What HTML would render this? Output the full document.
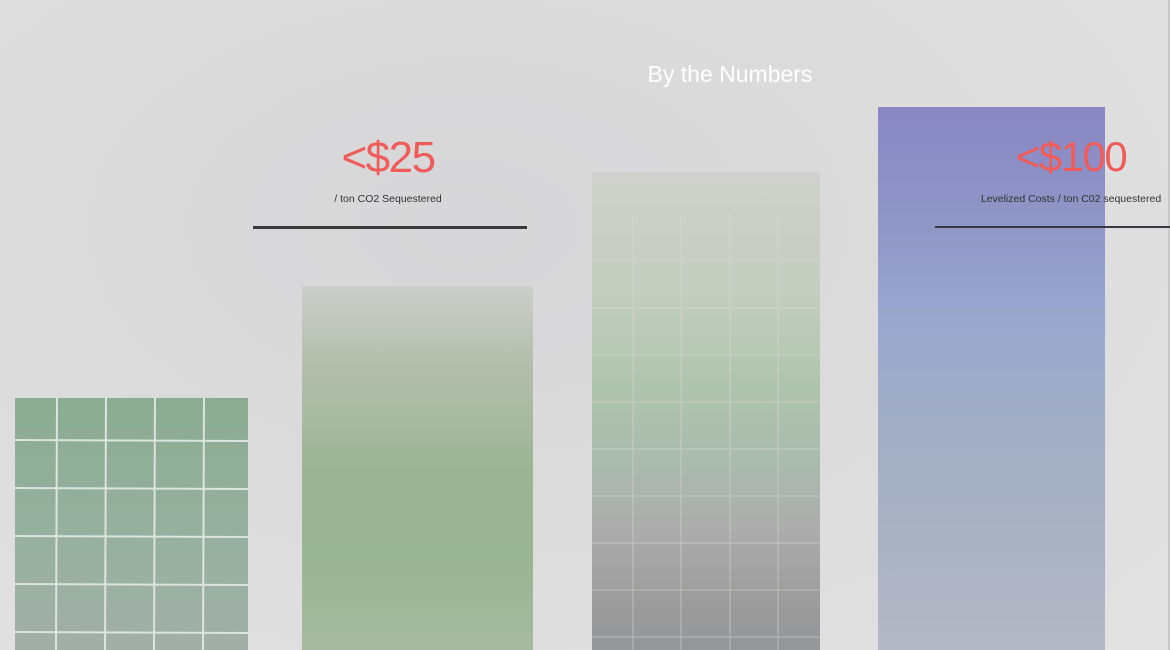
<!DOCTYPE html>
<html><head><meta charset="utf-8"><style>
html,body{margin:0;padding:0}
body{width:1170px;height:650px;overflow:hidden;position:relative;font-family:"Liberation Sans",sans-serif;
background:radial-gradient(ellipse at 40% 35%,#d6d6d8 0%,#dcdcdc 50%,#e2e2e2 100%);}
.bar{position:absolute;}
.t{position:absolute;text-align:center;}
.big{color:#f05c5a;font-size:44px;letter-spacing:-1.5px}
.sm{color:#333;font-size:10.5px}
.line{position:absolute;height:3px;background:#3a3a3e}
</style></head><body>
<div style="position:absolute;right:0;top:0;width:2px;height:650px;background:#c8c8cc"></div>
<div class="bar" style="left:15px;top:398px;width:233px;height:252px;background:linear-gradient(180deg,#8bab92 0%,#95b09e 50%,#a2afa8 100%);">
<svg width="233" height="252" style="position:absolute;left:0;top:0"><g stroke="#dde3de" stroke-width="2">
<line x1="42" y1="0" x2="41" y2="252"/><line x1="91" y1="0" x2="90" y2="252"/><line x1="140" y1="0" x2="139" y2="252"/><line x1="189" y1="0" x2="188" y2="252"/>
<line x1="0" y1="42" x2="233" y2="43"/><line x1="0" y1="90" x2="233" y2="91"/><line x1="0" y1="138" x2="233" y2="139"/><line x1="0" y1="186" x2="233" y2="187"/><line x1="0" y1="234" x2="233" y2="235"/></g></svg></div>
<div class="bar" style="left:302px;top:286px;width:231px;height:364px;background:linear-gradient(180deg,#cdcecb 0%,#b5bfae 20%,#9db595 50%,#9ab593 75%,#a6baa0 100%);"></div>
<div class="bar" style="left:592px;top:172px;width:228px;height:478px;background:linear-gradient(180deg,#d0d0cc 0%,#c4cdbf 25%,#afc4ae 45%,#aabbae 60%,#acacac 75%,#9c9c9c 90%,#959699 100%);">
<svg width="228" height="478" style="position:absolute;left:0;top:0"><g stroke="#dadcd8" stroke-width="1.2" opacity="0.45">
<line x1="41" y1="40" x2="41" y2="478"/><line x1="89" y1="40" x2="89" y2="478"/><line x1="138" y1="40" x2="138" y2="478"/><line x1="186" y1="40" x2="186" y2="478"/>
<line x1="0" y1="88" x2="228" y2="88"/><line x1="0" y1="136" x2="228" y2="136"/><line x1="0" y1="183" x2="228" y2="183"/><line x1="0" y1="230" x2="228" y2="230"/><line x1="0" y1="277" x2="228" y2="277"/><line x1="0" y1="324" x2="228" y2="324"/><line x1="0" y1="371" x2="228" y2="371"/><line x1="0" y1="418" x2="228" y2="418"/><line x1="0" y1="465" x2="228" y2="465"/></g></svg></div>
<div class="bar" style="left:878px;top:107px;width:227px;height:543px;background:linear-gradient(180deg,#8987c4 0%,#8f95c6 20%,#9aa8cf 40%,#a2aec4 60%,#aab2c2 80%,#b4b8c6 100%);"></div>
<div class="t" style="left:600px;top:61px;width:260px;color:#fff;font-size:23px">By the Numbers</div>
<div class="t big" style="left:288px;top:133px;width:200px">&lt;$25</div>
<div class="t sm" style="left:288px;top:193px;width:200px">/ ton CO2 Sequestered</div>
<div class="line" style="left:253px;top:226px;width:274px"></div>
<div class="t big" style="left:971px;top:133px;width:200px;font-size:42px">&lt;$100</div>
<div class="t sm" style="left:971px;top:193px;width:200px">Levelized Costs / ton C02 sequestered</div>
<div class="line" style="left:935px;top:226px;width:235px;height:2px"></div>
</body></html>
